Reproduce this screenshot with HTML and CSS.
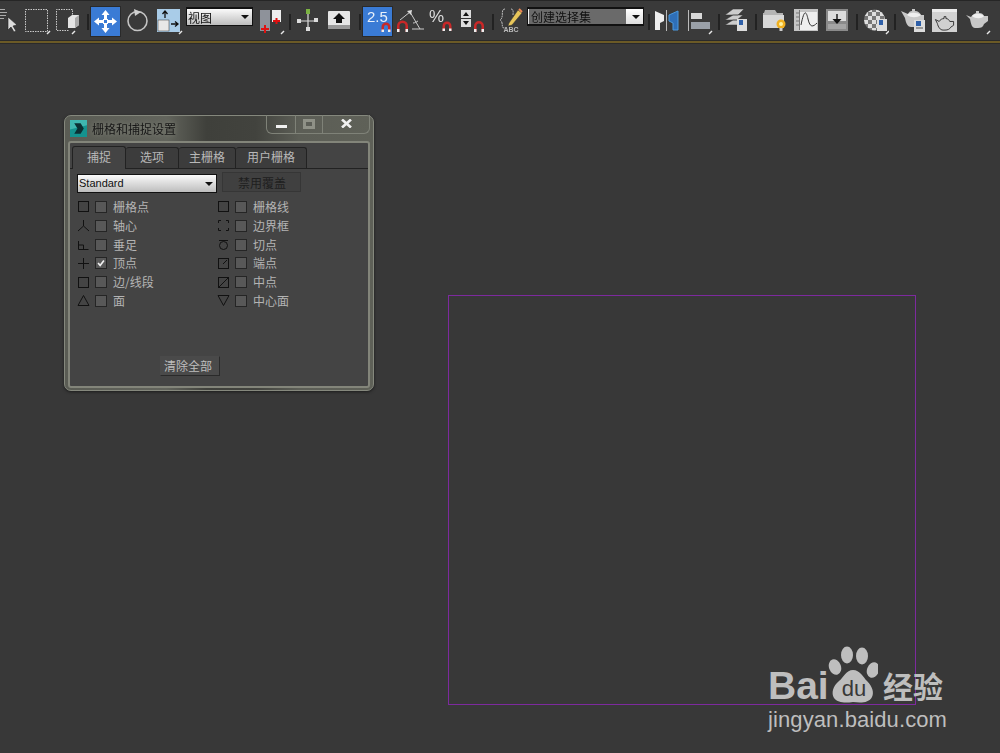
FILE: index.html
```html
<!DOCTYPE html>
<html lang="zh">
<head>
<meta charset="utf-8">
<title>栅格和捕捉设置</title>
<link rel="stylesheet" href="styles.css">
</head>
<body>
<div class="app">
  <div class="toolbar">
    <svg class="ic w16" viewBox="0 0 16 38"><path d="M0 9.500h5M0 12.500h7M0 15.500h6M0 18.500h4" stroke="#aaa" fill="none"/><path d="M8 17l0 13 3-3 3 5 2-1-3-5 4-1z" fill="#ddd" stroke="#222" stroke-width=".6"/></svg>
    <svg class="ic w26 ml9" viewBox="0 0 26 38"><rect x=".5" y="9.500" width="22" height="22" fill="none" stroke="#c8c8c8" stroke-dasharray="1.500 1"/><path class="flag" d="M22 34l3-3"/></svg>
    <svg class="ic w26 ml5" viewBox="0 0 26 38"><path d="M12.500 30.500H.5v-21h16v5" fill="none" stroke="#c8c8c8" stroke-dasharray="1.500 1"/><path d="M12 18l4-3h7v10l-4 3h-7z" fill="#e4e4e4"/><path d="M19 18v10l4-3V15z" fill="#aaa"/><path class="flag" d="M16 34l3-3"/></svg>
    <span class="sep ml5"></span>
    <span class="blue-btn ml2">
      <svg viewBox="0 0 29 29"><path d="M14.500 3l4 5h-2.500v4h-3V8H10.500zM14.500 26l4-5h-2.500v-4h-3v4H10.500zM3 14.500l5-4v2.500h4v3H8v2.500zM26 14.500l-5-4v2.500h-4v3h4v2.500z" fill="#fff"/><rect x="12.500" y="12.500" width="4" height="4" fill="#3a7bd5" stroke="#fff"/></svg>
    </span>
    <svg class="ic w22 ml7" viewBox="0 0 22 38"><circle cx="10.500" cy="21" r="9.500" fill="none" stroke="#c4c4c4" stroke-width="1.600"/><path d="M7 9l7 3-6 4z" fill="#d0d0d0"/></svg>
    <svg class="ic w26 ml8" viewBox="0 0 26 38"><rect x="0" y="9" width="23" height="23" fill="#a9cce8"/><rect x="1" y="20" width="11" height="11" fill="#e8e8e8" stroke="#333" stroke-width=".5"/><path d="M8 18v-6M5.500 14l2.500-3 2.500 3M14 24h6M18 21.500l3 2.500-3 2.500" stroke="#111" stroke-width="1.300" fill="none"/><path class="flag" d="M22 34l3-3"/></svg>
    <span class="combo view-combo ml3"><span class="combo-text">视图</span><i class="caret"></i></span>
    <svg class="ic w28 ml6" viewBox="0 0 28 38"><rect x="1" y="10" width="10" height="21" fill="#8e929a"/><rect x="13" y="10" width="9" height="12" fill="#eee"/><path d="M2 29h8M6 25v8M14 21h7M17.500 18v6" stroke="#e01010" stroke-width="2"/><path class="flag" d="M22 34l3-3"/></svg>
    <span class="sep ml2"></span>
    <svg class="ic w22 ml6" viewBox="0 0 22 38"><path d="M11 12v18M2 21h18" stroke="#ddd" stroke-width="1.200"/><rect x="9" y="9" width="4" height="5" fill="#7cb342"/><rect x="0" y="19" width="4" height="4" fill="#ddd"/><rect x="17" y="18" width="4" height="4" fill="#ddd"/><rect x="9" y="27" width="4" height="4" fill="#ddd"/></svg>
    <svg class="ic w23 ml9" viewBox="0 0 23 38"><rect x="0" y="11" width="22" height="18" rx="1" fill="#e6e6e6"/><rect x="0" y="25" width="22" height="4" fill="#999"/><path d="M11 13l6 6h-3v4H8v-4H5z" fill="#111"/></svg>
    <span class="sep ml8"></span>
    <span class="blue-btn snap25 ml2"><span class="num">2.5</span>
      <svg class="mag" viewBox="0 0 12 12"><path class="magp" d="M1.500 11V6a4.500 4.500 0 0 1 9 0v5h-2.500V6a2 2 0 0 0-4 0v5z"/><path d="M1.500 8.500h2.500v2.500H1.500zM8 8.500h2.500v2.500H8z" fill="#eee"/></svg>
    </span>
    <svg class="ic w27 ml5" viewBox="0 0 27 38"><path d="M13 12L3 20M13 12l10 17M15 29h13M21 21c-2 1-3 2-5 2" stroke="#ccc" fill="none"/><path d="M10 11l5-1-1 5z" fill="#ddd"/><path class="magp" d="M0 32v-6a5 5 0 0 1 11 0v6H8.500v-6a3 3 0 0 0-6 0v6z"/><path d="M0 29h2.500v3H0zM8.500 29H11v3H8.500z" fill="#eee"/></svg>
    <span class="pct ml4"><span class="pct-t">%</span><svg class="mag" viewBox="0 0 12 12"><path class="magp" d="M1.500 11V6a4.500 4.500 0 0 1 9 0v5h-2.500V6a2 2 0 0 0-4 0v5z"/><path d="M1.500 8.500h2.500v2.500H1.500zM8 8.500h2.500v2.500H8z" fill="#eee"/></svg></span>
    <svg class="ic w24 ml8" viewBox="0 0 24 38"><rect x="0" y="10" width="10" height="17" fill="#ddd"/><path d="M0 18.500h10" stroke="#333"/><path d="M5 12l3 4H2zM5 25l3-4H2z" fill="#111"/><path class="magp" d="M13 32v-6a5 5 0 0 1 10 0v6h-2.500v-6a2.500 2.500 0 0 0-5 0v6z"/><path d="M13 29h2.500v3H13zM20.500 29H23v3h-2.500z" fill="#eee"/></svg>
    <span class="sep ml7"></span>
    <svg class="ic w26 ml4" viewBox="0 0 26 38"><path d="M7 9C3 9 5 15 4 17 4 19 2 20 2 20c0 0 2 1 2 3 1 3-1 5 3 5M13 9c3 0 2 4 2 6" stroke="#bbb" fill="none" stroke-dasharray="2 .6"/><path d="M11 23l9-13 4 3-10 12-4 1z" fill="#e8c65a" stroke="#333" stroke-width=".5"/><path d="M21 9l3 3" stroke="#e85" stroke-width="2"/></svg>
    <span class="abc">ABC</span>
    <span class="combo sel-combo ml3"><span class="combo-input">创建选择集</span><i class="caret"></i></span>
    <span class="sep ml4"></span>
    <svg class="ic w26 ml5" viewBox="0 0 26 38"><path d="M0 11l9 4v6l-4 2v7H0z" fill="#eee"/><path d="M11.500 10v21" stroke="#bbb"/><path d="M23 11l-9 4v6l4 2v7h5z" fill="#2e6fb8" stroke="#4a9ae0"/></svg>
    <svg class="ic w25 ml7" viewBox="0 0 25 38"><path d="M.5 10v21" stroke="#bbb"/><rect x="3" y="13" width="11" height="6" fill="#d8d8d8"/><rect x="3" y="22" width="19" height="7" fill="#9aa0a8"/><path class="flag" d="M21 34l3-3"/></svg>
    <span class="sep ml5"></span>
    <svg class="ic w23 ml5" viewBox="0 0 23 38"><path d="M0 15l8-6h11l-6 6zM0 20l8-5h10l-6 5zM0 25l8-5h10l-6 5z" fill="#ccc" stroke="#333" stroke-width=".5"/><rect x="12" y="19" width="10" height="12" fill="#ddd"/><rect x="14" y="20" width="4" height="5" fill="#2e5fa8"/></svg>
    <span class="sep ml7"></span>
    <svg class="ic w24 ml6" viewBox="0 0 24 38"><path d="M0 13h1l1-3h10l2 3h6v4H0z" fill="#b4b4b4"/><path d="M0 15h21v13H0z" fill="#d8d8d8"/><circle cx="18" cy="24" r="4.500" fill="#f0b020"/><circle cx="18" cy="24" r="2" fill="#fff2a0"/><rect x="16.500" y="28" width="3" height="3" fill="#ccc"/></svg>
    <svg class="ic w24 ml7" viewBox="0 0 24 38"><rect x="0" y="9" width="24" height="22" fill="#c4c4c4"/><rect x="6" y="12" width="17" height="18" fill="#eee"/><path d="M5.500 10v20M2 13h3M2 17h3M2 21h3M2 25h3" stroke="#777"/><path d="M7 25C10 10 12 10 14 19s5 8 9 4" stroke="#333" fill="none"/></svg>
    <svg class="ic w22 ml8" viewBox="0 0 22 38"><rect x="0" y="9" width="22" height="22" fill="#8a8a8a"/><rect x="2" y="11" width="18" height="10" fill="#dcdcdc"/><rect x="2" y="24" width="18" height="5" fill="#a4a4a4"/><path d="M11 14v6" stroke="#111" stroke-width="1.400"/><path d="M6.500 19h9L11 24z" fill="#111"/></svg>
    <span class="sep ml8"></span>
    <svg class="ic w25 ml6" viewBox="0 0 25 38"><defs><pattern id="chk" width="8" height="8" patternUnits="userSpaceOnUse"><rect width="8" height="8" fill="#dedede"/><rect width="4" height="4" fill="#777"/><rect x="4" y="4" width="4" height="4" fill="#777"/></pattern></defs><circle cx="10.500" cy="20" r="10.500" fill="url(#chk)"/><rect x="13" y="19" width="10" height="12" fill="#ddd"/><rect x="15" y="20" width="4" height="5" fill="#2e5fa8"/><path class="flag" d="M22 34l3-3"/></svg>
    <span class="sep ml5"></span>
    <svg class="ic w26 ml5" viewBox="0 0 26 38"><path d="M0 11l7 3c1-2 2-3 4-3l0-2h3v2c3 0 5 2 6 4h3v7l-3 2c-1 2-3 3-6 3h-4c-3 0-5-3-6-9z" fill="#c8c8c8"/><path d="M6 15c2-3 10-3 14 0-4 3-10 3-14 0z" fill="#eee"/><rect x="13" y="20" width="11" height="12" fill="#ddd"/><rect x="15" y="21" width="5" height="5" fill="#2e5fa8"/><path d="M15 28h7" stroke="#555"/></svg>
    <span class="potbox ml5"><svg viewBox="0 0 25 24"><path d="M3 11l4 2c1-2 3-3 5-3V8h2v2c2 0 3 1 4 3h4v4l-3 2c-1 2-3 3-6 3h-2c-3 0-5-3-6-7z" fill="#d0d0d0" stroke="#333"/></svg></span>
    <svg class="ic w26 ml9" viewBox="0 0 26 38"><path d="M0 15l5 2c1-2 3-3 5-4v-2h3v2c3 0 4 1 5 3h4v5l-4 3c-1 3-3 4-6 4h-3c-3 0-4-4-5-9z" fill="#c8c8c8"/><path d="M6 16c2-3 9-3 12 0-2 3-9 3-12 0z" fill="#f0f0f0"/><path class="flag" d="M21 34l3-3"/></svg>
  </div>
  <div class="rule"></div>
  <main class="canvas">
    <section class="dialog">
      <header class="titlebar">
        <svg class="app-ic" viewBox="0 0 16 16"><rect width="16" height="16" fill="#14928e"/><path d="M0 0h16v5L0 9z" fill="#3fb6b0"/><path d="M4 3h6l3 5-3 5H4l3-5z" fill="#0b2f33"/></svg>
        <span class="title">栅格和捕捉设置</span>
        <div class="win-btns">
          <span class="wb wb-min"><i></i></span>
          <span class="wb wb-max"><i></i></span>
          <span class="wb wb-close"><svg viewBox="0 0 11 9"><path d="M1 .5l9 8M10 .5l-9 8"/></svg></span>
        </div>
      </header>
      <div class="panel">
        <nav class="tabs">
          <span class="tab active">捕捉</span>
          <span class="tab t2">选项</span>
          <span class="tab t3">主栅格</span>
          <span class="tab t4">用户栅格</span>
        </nav>
        <div class="tools">
          <span class="combo std-combo"><span class="combo-text">Standard</span><i class="caret"></i></span>
          <span class="btn disabled">禁用覆盖</span>
        </div>
        <div class="snaps">
          <label class="snap"><svg class="si" viewBox="0 0 13 13"><rect x="1.500" y="1.500" width="10" height="10"/></svg><span class="cb"></span><span>栅格点</span></label>
          <label class="snap"><svg class="si" viewBox="0 0 13 13"><rect x="1.500" y="1.500" width="10" height="10"/></svg><span class="cb"></span><span>栅格线</span></label>
          <label class="snap"><svg class="si" viewBox="0 0 13 13"><path d="M6.500 1v6L1 12M6.500 7l5.500 5"/></svg><span class="cb"></span><span>轴心</span></label>
          <label class="snap"><svg class="si" viewBox="0 0 13 13"><path d="M1.500 4V1.500H4M9 1.500h2.500V4M1.500 9v2.500H4M9 11.500h2.500V9"/></svg><span class="cb"></span><span>边界框</span></label>
          <label class="snap"><svg class="si" viewBox="0 0 13 13"><path d="M1.500 3V11.500h10M1.500 7h5v4.500"/></svg><span class="cb"></span><span>垂足</span></label>
          <label class="snap"><svg class="si" viewBox="0 0 13 13"><path d="M2 2.500h9"/><circle cx="6.500" cy="7.500" r="4"/></svg><span class="cb"></span><span>切点</span></label>
          <label class="snap"><svg class="si" viewBox="0 0 13 13"><path d="M1 6.500h11M6.500 1v11"/></svg><span class="cb on"><svg viewBox="0 0 12 12"><path d="M2.500 6l2.500 3 4.500-6"/></svg></span><span>顶点</span></label>
          <label class="snap"><svg class="si" viewBox="0 0 13 13"><rect x="1.500" y="1.500" width="10" height="10"/><path d="M6 7l4-4"/></svg><span class="cb"></span><span>端点</span></label>
          <label class="snap"><svg class="si" viewBox="0 0 13 13"><rect x="1.500" y="1.500" width="10" height="10"/></svg><span class="cb"></span><span>边/线段</span></label>
          <label class="snap"><svg class="si" viewBox="0 0 13 13"><rect x="1.500" y="1.500" width="10" height="10"/><path d="M1.500 11.500l10-10"/></svg><span class="cb"></span><span>中点</span></label>
          <label class="snap"><svg class="si" viewBox="0 0 13 13"><path d="M6.500 1.500l5.500 10H1z"/></svg><span class="cb"></span><span>面</span></label>
          <label class="snap"><svg class="si" viewBox="0 0 13 13"><path d="M6.500 11.500L12 1.500H1z"/></svg><span class="cb"></span><span>中心面</span></label>
        </div>
        <div class="foot"><span class="btn clear">清除全部</span></div>
      </div>
    </section>
    <div class="sel-rect"></div>
    <div class="wm">
      <div class="wm-top">
        <span class="wm-bai">Bai</span>
        <span class="paw"><svg viewBox="0 0 50 58"><ellipse cx="7" cy="21" rx="6" ry="8" transform="rotate(-20 7 21)"/><ellipse cx="19" cy="9" rx="6" ry="8.500"/><ellipse cx="34" cy="10" rx="6" ry="8.500"/><ellipse cx="45" cy="24" rx="6" ry="8" transform="rotate(20 45 24)"/><path d="M25 24c7 0 10 7 14 11 6 6 7 12 5 16-3 6-11 6-19 5-8 1-15 1-19-4-3-5-1-12 5-17 5-4 7-11 14-11z"/></svg><span class="wm-du">du</span></span>
        <span class="wm-cn">经验</span>
      </div>
      <div class="wm-url">jingyan.baidu.com</div>
    </div>
  </main>
</div>
</body>
</html>
```
FILE: styles.css
```css
html, body { margin: 0; padding: 0; }
body { width: 1000px; height: 753px; overflow: hidden; background: #383838; font-family: "Noto Sans CJK SC", "Liberation Sans", sans-serif; }
.app { display: flex; flex-direction: column; height: 753px; }

.toolbar { display: flex; align-items: flex-start; height: 40px; background: #3a3a3a; border-top: 1px solid #262626; box-sizing: border-box; white-space: nowrap; flex: none; filter: blur(.35px); }
.rule { flex: none; height: 4px; box-sizing: border-box; background: #6b5a26; border-top: 1px solid #2a2a2a; border-bottom: 1px solid #2a2a2a; }
.ic { display: block; height: 38px; flex: none; margin-top: -1px; }
.w16 { width: 16px; } .w22 { width: 22px; } .w23 { width: 23px; } .w24 { width: 24px; } .w25 { width: 25px; } .w26 { width: 26px; } .w27 { width: 27px; } .w28 { width: 28px; }
.ml2 { margin-left: 2px; } .ml3 { margin-left: 3px; } .ml4 { margin-left: 4px; } .ml5 { margin-left: 5px; } .ml6 { margin-left: 6px; } .ml7 { margin-left: 7px; } .ml8 { margin-left: 8px; } .ml9 { margin-left: 9px; }
.flag { stroke: #e8e8e8; stroke-width: 1.400; fill: none; }
.sep { flex: none; width: 2px; height: 16px; margin-top: 13px; background: #222; }
.blue-btn { flex: none; display: block; width: 29px; height: 29px; margin-top: 6px; background: #3a7bd5; box-shadow: 0 0 0 1px #2a2a2a; position: relative; }
.blue-btn > svg { display: block; width: 29px; height: 29px; }
.snap25 .num { position: absolute; left: 4px; top: 1px; font: 15px/18px "Liberation Sans", sans-serif; color: #e8f0fa; }
.blue-btn > .mag { position: absolute; left: 17px; top: 14px; width: 12px; height: 12px; }
.magp { fill: #c82828; }
.pct { flex: none; display: block; width: 25px; height: 37px; position: relative; }
.pct-t { position: absolute; left: 1px; top: 6px; font: 17px/20px "Liberation Sans", sans-serif; color: #ddd; }
.pct .mag { position: absolute; left: 13px; top: 19px; width: 12px; height: 12px; }
.abc { flex: none; margin: 24px 0 0 -26px; width: 26px; text-align: center; font: bold 7px/10px "Liberation Sans", sans-serif; color: #bbb; }

.combo { flex: none; display: flex; align-items: center; justify-content: space-between; box-sizing: border-box; border: 1px solid #111; background: linear-gradient(#fafafa, #bdbdbd); color: #111; font-size: 12px; }
.caret { flex: none; width: 0; height: 0; border: 4px solid transparent; border-top: 4px solid #111; border-bottom: 0; margin-right: 3px; }
.view-combo { width: 67px; height: 19px; margin-top: 6px; border-top-width: 2px; }
.combo-text { padding-left: 1px; line-height: 15px; }
.sel-combo { width: 117px; height: 19px; margin-top: 6px; background: linear-gradient(#fff, #ddd); border-width: 2px 1px; }
.combo-input { flex: none; width: 97px; height: 15px; margin-left: 1px; padding-left: 2px; background: #6a6a6a; box-sizing: border-box; line-height: 15px; color: #111; }
.potbox { flex: none; display: block; width: 25px; height: 23px; margin-top: 8px; background: linear-gradient(#ececec 3px, #d2d2d2 3px); }
.potbox svg { display: block; width: 25px; height: 23px; }

.canvas { flex: 1; position: relative; background: #383838; }
.dialog { position: absolute; left: 64px; top: 71px; width: 310px; height: 276px; box-sizing: border-box; padding: 0 3px 2px; display: flex; flex-direction: column; border-radius: 7px; background: linear-gradient(90deg, #5a5c54 0, #62645c 33%, #3f403b 46%, #42433e 62%, #5c5e56 76%, #5f6158); border: 1px solid #85887d; box-shadow: 0 1px 3px #1c1c1c; filter: blur(.3px); }
.titlebar { flex: none; height: 25px; display: flex; align-items: center; position: relative; }
.app-ic { width: 17px; height: 17px; margin: 0 5px 0 2px; flex: none; }
.title { font-size: 12px; line-height: 16px; color: #161616; text-shadow: 0 0 5px #8a8c82; }
.win-btns { position: absolute; right: 0; top: -1px; display: flex; height: 19px; border: 1px solid #7f8278; border-top: 0; border-radius: 0 0 6px 6px; box-sizing: border-box; }
.wb { display: flex; align-items: center; justify-content: center; box-sizing: border-box; border-left: 1px solid #7f8278; }
.wb:first-child { border-left: 0; }
.wb-min { width: 28px; } .wb-max { width: 27px; } .wb-close { width: 47px; }
.wb-min i { display: block; width: 11px; height: 3px; margin-top: 5px; background: #f0f0f0; }
.wb-max i { display: block; width: 12px; height: 10px; box-sizing: border-box; border: 3px solid #8f9187; background: #5c5e57; }
.wb-close svg { display: block; width: 11px; height: 9px; margin-bottom: 1px; fill: none; stroke: #f0f0f0; stroke-width: 2.600; }

.panel { flex: 1; background: #444; border: 2px solid #83857a; border-radius: 3px; display: flex; flex-direction: column; }
.tabs { flex: none; display: flex; align-items: flex-end; height: 26px; box-sizing: border-box; padding-left: 2px; border-bottom: 1px solid #222; }
.tab { flex: none; height: 21px; box-sizing: border-box; text-align: center; font-size: 12px; line-height: 18px; color: #b8b8b8; background: #3c3c3c; border: 1px solid #222; border-bottom: 0; border-left: 0; border-radius: 3px 3px 0 0; }
.tab.active { width: 54px; height: 23px; line-height: 20px; background: #444; border-left: 1px solid #222; position: relative; top: 1px; }
.t2 { width: 53px; } .t3 { width: 57px; } .t4 { width: 71px; }
.tools { flex: none; display: flex; align-items: flex-start; gap: 5px; height: 28px; padding: 3px 0 0 7px; box-sizing: border-box; }
.std-combo { width: 140px; height: 19px; margin-top: 2px; font: 11px/15px "Liberation Sans", sans-serif; }
.btn { flex: none; box-sizing: border-box; text-align: center; font-size: 12px; }
.disabled { width: 79px; height: 20px; line-height: 19px; padding-left: 1px; color: #1e1e1e; background: #404040; border: 1px solid #363636; }
.snaps { flex: none; display: grid; grid-template-columns: 140px 140px; grid-auto-rows: 18.800px; padding-left: 7px; margin-top: .6px; }
.snap { display: flex; align-items: center; font-size: 12px; color: #b4b4b4; line-height: 16px; }
.si { flex: none; width: 13px; height: 13px; margin-right: 5px; fill: none; stroke: #111; stroke-width: 1; }
.cb { flex: none; width: 12px; height: 12px; margin-right: 6px; box-sizing: border-box; background: #585858; border: 1px solid #252525; display: block; }
.cb.on svg { display: block; width: 10px; height: 10px; fill: none; stroke: #f2f2f2; stroke-width: 2; }
.foot { flex: 1; display: flex; justify-content: flex-start; align-items: flex-end; padding: 0 0 10px 90px; }
.clear { width: 60px; height: 20px; line-height: 17px; padding-right: 4px; color: #bdbdbd; background: #4a4a4a; border: 1px solid #4a4a4a; border-right-color: #2a2a2a; border-bottom-color: #2a2a2a; }

.sel-rect { position: absolute; left: 448px; top: 251px; width: 468px; height: 410px; box-sizing: border-box; border: 1px solid #7d2a9e; }
.wm { position: absolute; left: 768px; top: 602px; width: 190px; color: #bebebe; }
.wm-top { display: flex; align-items: flex-end; height: 58px; position: relative; }
.wm-bai { font: bold 39px/36px "Liberation Sans", sans-serif; flex: none; width: 60px; }
.paw { flex: none; width: 50px; height: 58px; position: relative; display: block; }
.paw svg { display: block; width: 50px; height: 58px; fill: #bebebe; }
.wm-du { position: absolute; left: 9px; top: 31px; width: 34px; text-align: center; font: 22px/24px "Liberation Sans", sans-serif; color: #383838; }
.wm-cn { flex: none; margin-left: 5px; font-weight: 700; font-size: 30px; line-height: 38px; }
.wm-url { font: 22px/26px "Liberation Sans", sans-serif; letter-spacing: .1px; margin-top: 3px; }
```
